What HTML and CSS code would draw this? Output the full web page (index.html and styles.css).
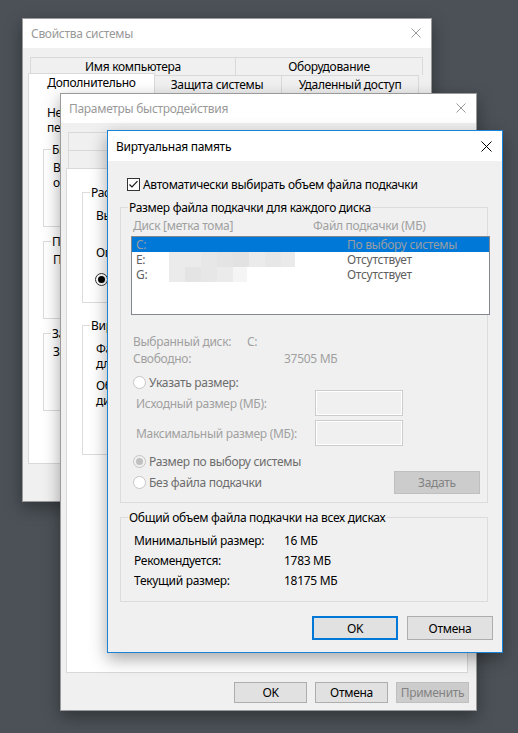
FILE: index.html
```html
<!DOCTYPE html>
<html lang="ru">
<head>
<meta charset="utf-8">
<title>Виртуальная память</title>
<link rel="stylesheet" href="styles.css">
</head>
<body>
<div class="desk">

  <!-- Window 1: Свойства системы -->
  <div class="win inactive w1">
    <div class="titlebar">
      <span class="title">Свойства системы</span>
      <span class="close"><svg width="10" height="10" viewBox="0 0 10 10"><path d="M0.5 0.5L9.5 9.5M9.5 0.5L0.5 9.5" stroke="currentColor" stroke-width="1"/></svg></span>
    </div>
    <div class="wbody b1">
      <div class="tabrow t1r1">
        <div class="tab w205">Имя компьютера</div>
        <div class="tab w187">Оборудование</div>
      </div>
      <div class="tabrow t1r2">
        <div class="tab sel w123">Дополнительно</div>
        <div class="tab w131">Защита системы</div>
        <div class="tab w138">Удаленный доступ</div>
      </div>
      <div class="panel p1">
        <p class="note">Необходимо иметь права администратора для изменения большинства<br>перечисленных параметров.</p>
        <fieldset class="grp g1"><legend>Быстродействие</legend>
          <p>Визуальные эффекты, использование процессора,<br>оперативной и виртуальной памяти</p>
        </fieldset>
        <fieldset class="grp g1"><legend>Профили пользователей</legend>
          <p>Параметры рабочего стола, относящиеся ко входу в систему</p>
        </fieldset>
        <fieldset class="grp g1"><legend>Загрузка и восстановление</legend>
          <p>Загрузка и восстановление системы, отладочная информация</p>
        </fieldset>
      </div>
    </div>
  </div>

  <!-- Window 2: Параметры быстродействия -->
  <div class="win inactive w2">
    <div class="titlebar">
      <span class="title">Параметры быстродействия</span>
      <span class="close"><svg width="10" height="10" viewBox="0 0 10 10"><path d="M0.5 0.5L9.5 9.5M9.5 0.5L0.5 9.5" stroke="currentColor" stroke-width="1"/></svg></span>
    </div>
    <div class="wbody b2">
      <div class="tabrow t2r1">
        <div class="tab w400">Предотвращение выполнения данных</div>
      </div>
      <div class="tabrow t2r2">
        <div class="tab w200">Визуальные эффекты</div>
        <div class="tab sel w196">Дополнительно</div>
      </div>
      <div class="panel p2">
        <fieldset class="grp g2a"><legend>Распределение времени процессора</legend>
          <p>Выберите оптимальное распределение ресурсов процессора.</p>
          <p class="opt">Оптимизировать работу:</p>
          <div class="radio-row"><span class="radio on"></span><span>программ</span></div>
        </fieldset>
        <fieldset class="grp g2b"><legend>Виртуальная память</legend>
          <p>Файл подкачки - это область на жестком диске, используемая<br>для хранения данных при нехватке оперативной памяти.</p>
          <p class="opt2">Общий объем файла подкачки на всех<br>дисках: 18175 МБ</p>
        </fieldset>
      </div>
      <div class="btnrow b2btns">
        <button class="btn sm">OK</button>
        <button class="btn sm">Отмена</button>
        <button class="btn sm dis">Применить</button>
      </div>
    </div>
  </div>

  <!-- Window 3: Виртуальная память -->
  <div class="win active w3">
    <div class="titlebar">
      <span class="title">Виртуальная память</span>
      <span class="close"><svg width="11" height="11" viewBox="0 0 11 11"><path d="M0.5 0.5L10.5 10.5M10.5 0.5L0.5 10.5" stroke="currentColor" stroke-width="1"/></svg></span>
    </div>
    <div class="wbody b3">
      <div class="chk-row">
        <span class="chk"><svg width="11" height="11" viewBox="0 0 11 11"><path d="M1.5 5.5L4 8L9.5 2.2" fill="none" stroke="#1a1a1a" stroke-width="1.2"/></svg></span>
        <span>Автоматически выбирать объем файла подкачки</span>
      </div>

      <fieldset class="grp vm1"><legend>Размер файла подкачки для каждого диска</legend>
        <div class="cols dim">
          <span class="c1">Диск [метка тома]</span>
          <span>Файл подкачки (МБ)</span>
        </div>
        <div class="list">
          <div class="lrow selrow"><span class="c1">C:</span><span>По выбору системы</span></div>
          <div class="lrow"><span class="c1"><span class="drv">E:</span><span class="mosaic"><i class="ta"></i><i class="ta"></i><i class="tb"></i><i class="tc"></i><i class="td"></i><i class="ta"></i><i class="tb"></i><i class="te"></i></span></span><span>Отсутствует</span></div>
          <div class="lrow"><span class="c1"><span class="drv">G:</span><span class="mosaic"><i class="ta"></i><i class="tc"></i><i class="tb"></i><i class="ta"></i><i class="tf"></i></span></span><span>Отсутствует</span></div>
        </div>
        <div class="info dim first"><span class="il">Выбранный диск:</span><span>C:</span></div>
        <div class="info dim"><span class="il2">Свободно:</span><span>37505 МБ</span></div>

        <div class="radio-row r-spec"><span class="radio"></span><span class="rl">Указать размер:</span></div>
        <div class="size-row"><span class="sl dim">Исходный размер (МБ):</span><span class="tbox"></span></div>
        <div class="size-row second"><span class="sl dim">Максимальный размер (МБ):</span><span class="tbox"></span></div>
        <div class="radio-row r-sys"><span class="radio on dis"></span><span class="rl">Размер по выбору системы</span></div>
        <div class="radio-row r-none">
          <span class="radio"></span><span class="rl">Без файла подкачки</span>
          <button class="btn set dis">Задать</button>
        </div>
      </fieldset>

      <fieldset class="grp vm2"><legend>Общий объем файла подкачки на всех дисках</legend>
        <div class="trow"><span class="tl">Минимальный размер:</span><span>16 МБ</span></div>
        <div class="trow"><span class="tl">Рекомендуется:</span><span>1783 МБ</span></div>
        <div class="trow"><span class="tl">Текущий размер:</span><span>18175 МБ</span></div>
      </fieldset>

      <div class="btnrow b3btns">
        <button class="btn lg def">OK</button>
        <button class="btn lg">Отмена</button>
      </div>
    </div>
  </div>

</div>
</body>
</html>
```
FILE: styles.css
```css
* { box-sizing: border-box; }
html, body { margin: 0; padding: 0; }
body {
  background: #4b5157;
  font: 12px/15px "Noto Sans", "Segoe UI", "DejaVu Sans", sans-serif;
  letter-spacing: -0.3px;
  color: #000;
  overflow: hidden;
}
p { margin: 0; }
.desk { position: relative; width: 518px; height: 733px; }

/* windows */
.win {
  position: absolute;
  display: flex;
  flex-direction: column;
  background: #f0f0f0;
  border: 1px solid #9a9a9a;
  box-shadow: 0 6px 16px rgba(0, 0, 0, 0.35);
  overflow: hidden;
}
.w1 { left: 22px; top: 18px; width: 410px; height: 484px; z-index: 1; }
.w2 { left: 60px; top: 93px; width: 417px; height: 618px; z-index: 2; }
.w3 { left: 107px; top: 130px; width: 396px; height: 523px; z-index: 3; border-color: #1883d7; }

.titlebar {
  flex: none;
  display: flex;
  align-items: center;
  height: 29px;
  background: #fff;
  padding-left: 8px;
}
.w3 .titlebar { height: 30px; }
.inactive .titlebar { color: #999; }
.active .titlebar { color: #000; }
.close {
  margin-left: auto;
  width: 30px;
  height: 100%;
  display: flex;
  align-items: center;
  justify-content: center;
  padding-bottom: 2px;
}
.inactive .close { color: #999; }
.active .close { color: #000; }
.w3 .close { width: 31px; padding-bottom: 0; }

.wbody { flex: 1; display: flex; flex-direction: column; }

/* tabs */
.tabrow { display: flex; height: 18px; padding-left: 2px; flex: none; }
.tab {
  flex: none;
  border: 1px solid #d9d9d9;
  border-bottom: none;
  margin-right: -1px;
  background: #f0f0f0;
  text-align: center;
  line-height: 18px;
  white-space: nowrap;
  overflow: hidden;
}
.tab.sel {
  position: relative;
  z-index: 2;
  background: #fff;
  height: 21px;
  margin: -2px -3px -1px -2px;
  line-height: 17px;
}
.w205 { width: 206px; } .w187 { width: 188px; }
.w123 { width: 127px; } .w131 { width: 130px; } .w138 { width: 138px; }
.w400 { width: 400px; } .w200 { width: 200px; } .w196 { width: 204px; }

.b1 { padding: 0 9px 0 5px; }
.t1r1 { margin-top: 9px; }

.panel {
  background: #fff;
  border: 1px solid #d9d9d9;
  position: relative;
  z-index: 1;
}
.p1 { height: 371px; padding: 11px 14px 0 14px; }
.note { padding-left: 4px; white-space: nowrap; }

.grp {
  margin: 0;
  border: 1px solid #dcdcdc;
  padding: 0;
  min-width: 0;
}
.grp legend {
  padding: 0 1px;
  margin-left: 7px;
  line-height: 15px;
}
.g1 { height: 85px; margin-top: 7px; padding-top: 3px; }
.g1 + .g1 { margin-top: 7px; }
.g1 > p { white-space: nowrap; padding-left: 9px; }

/* window 2 */
.b2 { padding: 0 8px 0 5px; }
.t2r1 { margin-top: 9px; }
.p2 { height: 505px; padding: 16px 14px 0 15px; }
.g2a { height: 118px; padding-top: 8px; }
.g2a > p { white-space: nowrap; padding-left: 13px; }
.g2a .opt { margin-top: 22px; }
.g2a .radio-row { margin-top: 12px; padding-left: 12px; }
.g2b { height: 137px; margin-top: 15px; padding-top: 8px; }
.g2b > p { white-space: nowrap; padding-left: 13px; }
.g2b .opt2 { margin-top: 7px; }

.btnrow { display: flex; justify-content: flex-end; flex: none; }
.b2btns { margin-top: 9px; gap: 8px; padding-right: 0; margin-right: -1px; }

.btn {
  font: inherit;
  letter-spacing: inherit;
  color: #000;
  background: #e1e1e1;
  border: 1px solid #adadad;
  padding: 0;
  margin: 0;
}
.btn.sm { width: 73px; height: 21px; }
.btn.lg { width: 86px; height: 24px; }
.btn.def { border: 2px solid #0078d7; }
.btn.dis { background: #cccccc; border-color: #bfbfbf; color: #838383; }

/* window 3 */
.b3 { padding: 0 14px 0 12px; }
.chk-row { margin-top: 16px; height: 15px; display: flex; align-items: center; padding-left: 7px; }
.chk {
  width: 13px; height: 13px;
  border: 1px solid #333;
  background: #fff;
  display: flex; align-items: center; justify-content: center;
  margin-right: 3px;
}

.vm1 { margin-top: 8px; padding: 3px 0 8px 0; }
.dim { color: #a0a0a0; }
.cols { display: flex; padding-left: 12px; height: 15px; }
.cols .c1 { width: 180px; }

.list {
  margin: 3px 0 0 10px;
  width: 359px;
  height: 79px;
  border: 1px solid #828790;
  background: #fff;
  padding-top: 0;
}
.lrow { display: flex; height: 15px; line-height: 15px; padding-left: 4px; color: #606060; white-space: nowrap; }
.lrow .c1 { width: 211px; display: flex; }
.selrow { background: #0078d7; color: #9a9ea4; }
.drv { width: 33px; }
.mosaic { display: flex; height: 15px; }
.mosaic i { display: block; width: 16px; height: 15px; }
.mosaic i:last-child { width: 14px; }
.ta { background: #ebebeb; }
.tb { background: #e7e7e7; }
.tc { background: #e4e4e4; }
.td { background: #e2e2e2; }
.te { background: #eaeaea; }
.tf { background: #f5f5f5; }

.info { display: flex; height: 17px; line-height: 17px; padding-left: 12px; }
.info.first { margin-top: 18px; }
.il { width: 114px; }
.il2 { width: 151px; }

.radio-row { display: flex; align-items: center; padding-left: 12px; height: 15px; }
.radio {
  width: 13px; height: 13px;
  border: 1px solid #c6c6c6;
  border-radius: 50%;
  background: #fff;
  display: inline-flex; align-items: center; justify-content: center;
  margin-right: 3px;
  flex: none;
}
.radio.on::after { content: ""; width: 7px; height: 7px; border-radius: 50%; background: #000; }
.g2a .radio { border-color: #333; }
.radio.dis { background: #f0f0f0; }
.radio.on.dis::after { background: #c0c0c0; }
.rl { color: #6d6d6d; }
.r-spec { margin-top: 8px; }

.size-row { display: flex; align-items: center; height: 26px; padding-left: 15px; }
.size-row.second { margin-top: 4px; }
.sl { width: 179px; }
.tbox {
  width: 88px; height: 26px;
  border: 1px solid #cccccc;
  background: #f0f0f0;
  box-shadow: inset 0 0 0 1px #fff;
}
.r-sys { margin-top: 8px; }
.r-none { margin-top: 2px; height: 23px; }
.btn.set { margin-left: auto; margin-right: 7px; width: 86px; height: 23px; }

.vm2 { margin-top: 7px; padding: 6px 0 10px 0; }
.trow { display: flex; height: 20px; line-height: 20px; padding-left: 13px; }
.tl { width: 150px; }

.b3btns { margin-top: 14px; gap: 9px; margin-right: -5px; }
```
